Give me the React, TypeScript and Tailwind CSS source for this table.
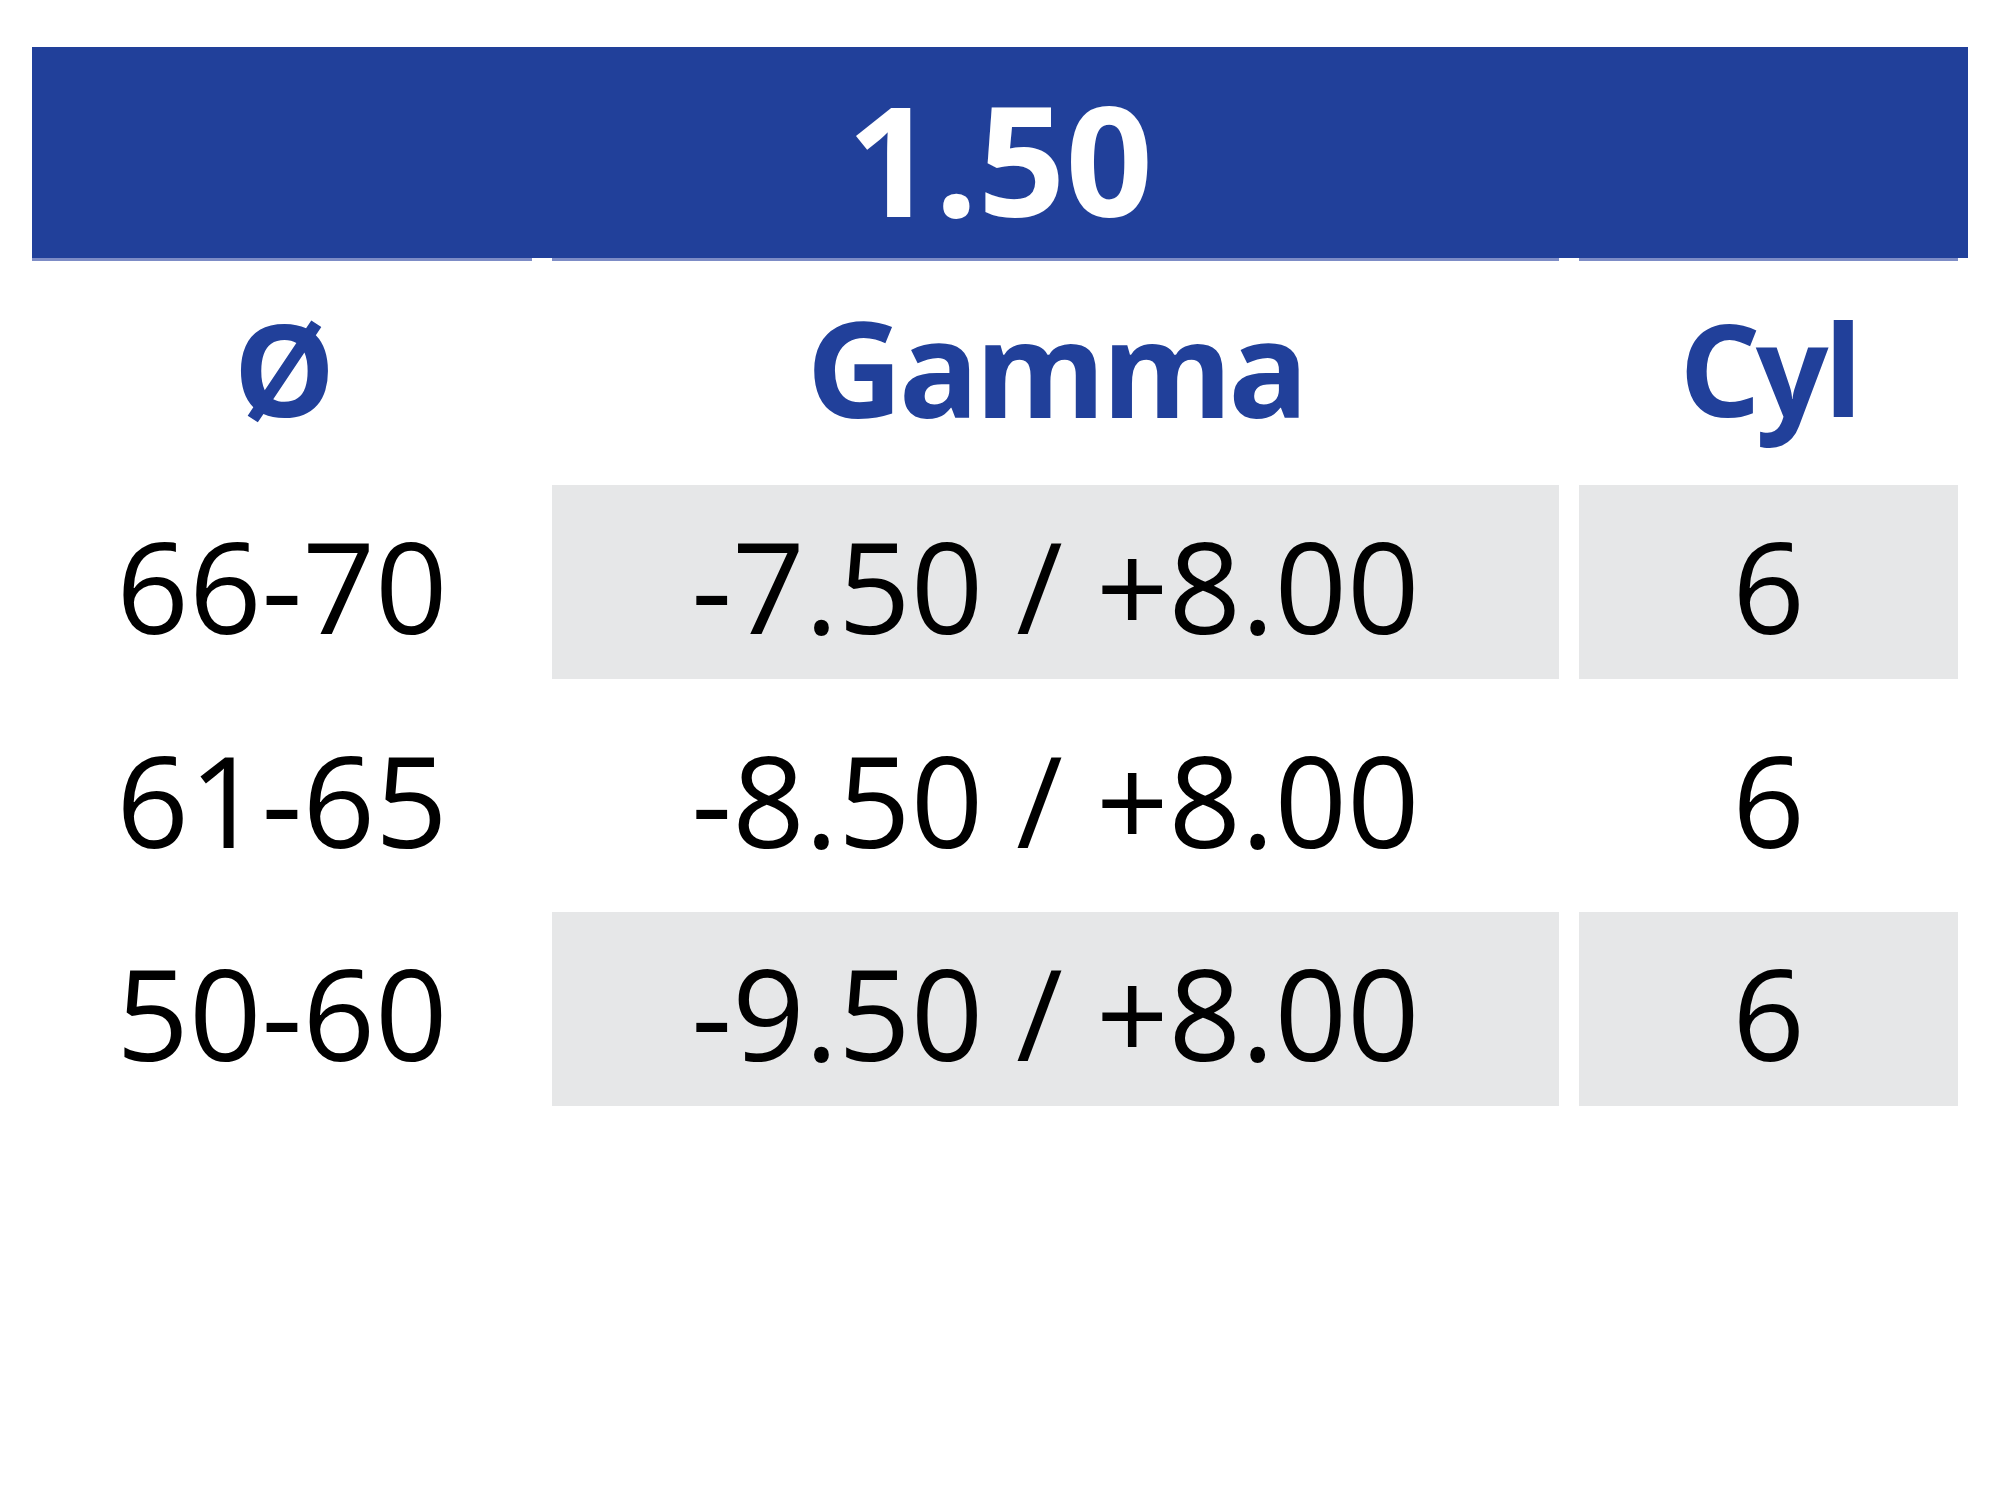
const rows = [
  { size: '66-70', range: '-7.50 / +8.00', cyl: '6', shaded: true },
  { size: '61-65', range: '-8.50 / +8.00', cyl: '6', shaded: false },
  { size: '50-60', range: '-9.50 / +8.00', cyl: '6', shaded: true },
];

const COLS = 'grid grid-cols-[500px_1007px_379px] gap-x-[20px]';

export default function App() {
  return (
    <div className="min-h-[1500px] w-[2000px] bg-white font-['Open_Sans',sans-serif]">
      <div className="w-[1968px] pl-[32px] pt-[47px]">
        {/* index title */}
        <div className="flex h-[211px] w-[1936px] justify-center bg-[#21409a] pt-[34px]">
          <span className="text-[153px] font-bold leading-none text-white">1.50</span>
        </div>
        <div className={`${COLS} h-[3px]`}>
          <div className="bg-[#7d8cc6]" />
          <div className="bg-[#7d8cc6]" />
          <div className="bg-[#7d8cc6]" />
        </div>

        {/* column labels */}
        <div className={`${COLS} h-[204px] font-bold leading-none text-[#21409a]`}>
          <div className="flex justify-center pt-[43px] text-[128px] tracking-[-5px]">Ø</div>
          <div className="flex justify-center pt-[39px] text-[133px] tracking-[-4px]">Gamma</div>
          <div className="flex justify-center pt-[43px] text-[128px] tracking-[-5px]">Cyl</div>
        </div>

        {/* values */}
        <div className={`${COLS} mt-[20px] gap-y-[19.5px] text-[127px] leading-none text-black`}>
          {rows.map((r) => (
            <div key={r.size} className="contents">
              <div className="flex h-[194px] justify-center pt-[36px]">{r.size}</div>
              <div
                className={`flex h-[194px] justify-center pt-[36px] ${r.shaded ? 'bg-[#e6e7e8]' : ''}`}
              >
                {r.range}
              </div>
              <div
                className={`flex h-[194px] justify-center pt-[36px] ${r.shaded ? 'bg-[#e6e7e8]' : ''}`}
              >
                {r.cyl}
              </div>
            </div>
          ))}
        </div>
      </div>
    </div>
  );
}
